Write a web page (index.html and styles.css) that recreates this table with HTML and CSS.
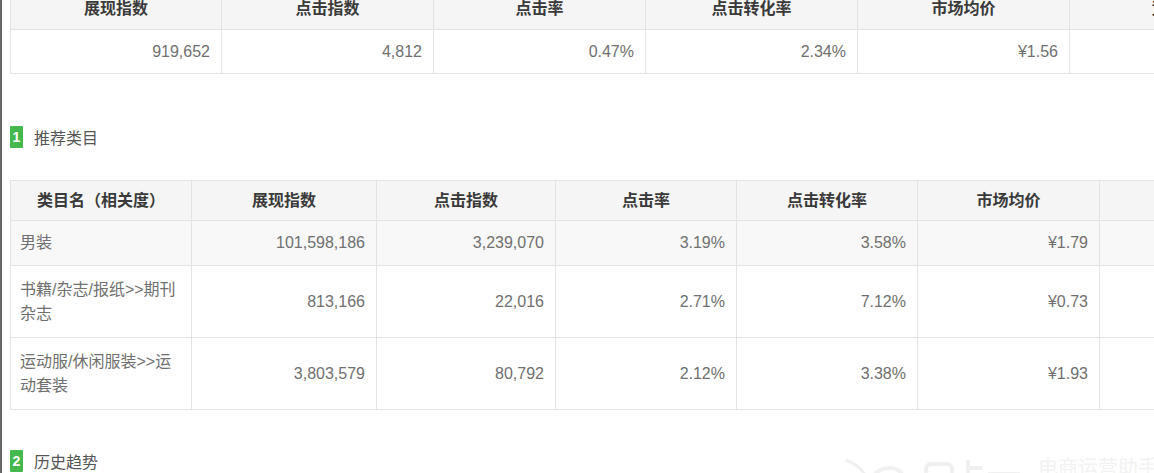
FILE: index.html
```html
<!DOCTYPE html>
<html lang="zh-CN">
<head>
<meta charset="utf-8">
<title>类目分析</title>
<link rel="stylesheet" href="styles.css">
</head>
<body>
<div class="page">
  <table class="grid grid-top">
    <colgroup>
      <col class="c-top-first"><col class="c-top"><col class="c-top"><col class="c-top"><col class="c-top"><col class="c-top">
    </colgroup>
    <thead>
      <tr class="row-head-top">
        <th>展现指数</th><th>点击指数</th><th>点击率</th><th>点击转化率</th><th>市场均价</th><th>竞争度</th>
      </tr>
    </thead>
    <tbody>
      <tr class="row-data-top">
        <td class="num">919,652</td><td class="num">4,812</td><td class="num">0.47%</td><td class="num">2.34%</td><td class="num">¥1.56</td><td class="num"></td>
      </tr>
    </tbody>
  </table>

  <div class="section-title first">
    <span class="badge">1</span><span class="title-text">推荐类目</span>
  </div>

  <table class="grid grid-cat">
    <colgroup>
      <col class="c1"><col class="c2"><col class="c3"><col class="c4"><col class="c5"><col class="c6"><col class="c7">
    </colgroup>
    <thead>
      <tr class="row-head">
        <th>类目名（相关度）</th><th>展现指数</th><th>点击指数</th><th>点击率</th><th>点击转化率</th><th>市场均价</th><th></th>
      </tr>
    </thead>
    <tbody>
      <tr class="row-short row-hl">
        <td class="name">男装</td><td class="num">101,598,186</td><td class="num">3,239,070</td><td class="num">3.19%</td><td class="num">3.58%</td><td class="num">¥1.79</td><td></td>
      </tr>
      <tr class="row-tall">
        <td class="name">书籍/杂志/报纸&gt;&gt;期刊杂志</td><td class="num">813,166</td><td class="num">22,016</td><td class="num">2.71%</td><td class="num">7.12%</td><td class="num">¥0.73</td><td></td>
      </tr>
      <tr class="row-tall">
        <td class="name">运动服/休闲服装&gt;&gt;运动套装</td><td class="num">3,803,579</td><td class="num">80,792</td><td class="num">2.12%</td><td class="num">3.38%</td><td class="num">¥1.93</td><td></td>
      </tr>
    </tbody>
  </table>

  <div class="section-title second">
    <span class="badge">2</span><span class="title-text">历史趋势</span>
  </div>

  <div class="watermark" aria-hidden="true">
    <svg width="190" height="26" viewBox="0 0 190 26">
      <path d="M4 6 Q20 12 26 26" fill="none" stroke="#f0f0f0" stroke-width="3"/>
      <path d="M30 26 Q34 14 48 14 Q60 14 62 26" fill="none" stroke="#f1f1f1" stroke-width="4"/>
      <rect x="84" y="10" width="26" height="16" rx="5" fill="none" stroke="#f0f0f0" stroke-width="4"/>
      <path d="M126 6 V26 M126 14 H140 M146 20 H178" fill="none" stroke="#f0f0f0" stroke-width="4"/>
    </svg>
    <span class="wm-text">电商运营助手</span>
  </div>
</div>
</body>
</html>
```

FILE: styles.css
```css
html, body {
  margin: 0;
  padding: 0;
  background: #ffffff;
  overflow: hidden;
}

body {
  font-family: "Liberation Sans", Arial, "Noto Sans CJK SC", sans-serif;
  font-size: 16px;
  color: #707070;
}

.page {
  position: relative;
  height: 473px;
  overflow: hidden;
  border-left: 2px solid #666666;
  padding-left: 8px;
  box-sizing: border-box;
}

.grid {
  border-collapse: collapse;
  table-layout: fixed;
}

.grid th,
.grid td {
  border: 1px solid #e3e3e3;
  line-height: 24px;
  padding: 0 10px;
  white-space: normal;
  overflow: hidden;
}

.grid th {
  background: #f5f5f5;
  color: #3a3a3a;
  font-weight: bold;
  text-align: center;
  font-family: "Liberation Sans", "Noto Sans CJK SC", sans-serif;
}

.grid td.num {
  text-align: right;
  padding-right: 11px;
}

.grid td.name {
  text-align: left;
  padding-left: 9px;
  font-family: "Liberation Sans", "Noto Sans CJK SC", sans-serif;
}

/* top table */
.grid-top {
  width: 1271px;
  margin-top: -13px;
}

.c-top-first { width: 211px; }
.c-top { width: 212px; }

.row-head-top th {
  height: 41px;
}

.row-data-top td {
  height: 43px;
}

/* section titles */
.section-title {
  display: flex;
  align-items: center;
  gap: 11px;
  height: 22px;
}

.section-title.first {
  margin-top: 52px;
  margin-bottom: 32px;
}

.section-title.second {
  margin-top: 40px;
}

.badge {
  display: flex;
  align-items: center;
  justify-content: center;
  width: 13px;
  height: 22px;
  background: #45b94e;
  color: #ffffff;
  font-size: 14px;
  font-weight: bold;
  border-radius: 1px;
}

.title-text {
  color: #555555;
  font-size: 16px;
  font-family: "Liberation Sans", "Noto Sans CJK SC", sans-serif;
}

/* category table */
.grid-cat {
  width: 1289px;
}

.c1 { width: 181px; }
.c2 { width: 185px; }
.c3 { width: 179px; }
.c4 { width: 181px; }
.c5 { width: 181px; }
.c6 { width: 182px; }
.c7 { width: 200px; }

.row-head th {
  height: 39px;
}

.row-short td {
  height: 44px;
}

.row-hl td {
  background: #f8f8f8;
}

.row-tall td {
  height: 71px;
}

/* watermark */
.watermark {
  position: absolute;
  left: 840px;
  top: 454px;
  display: flex;
  align-items: flex-end;
  gap: 6px;
}

.wm-text {
  color: #f2f2f2;
  font-size: 20px;
  font-family: "Noto Sans CJK SC", sans-serif;
  line-height: 26px;
  white-space: nowrap;
}
```
